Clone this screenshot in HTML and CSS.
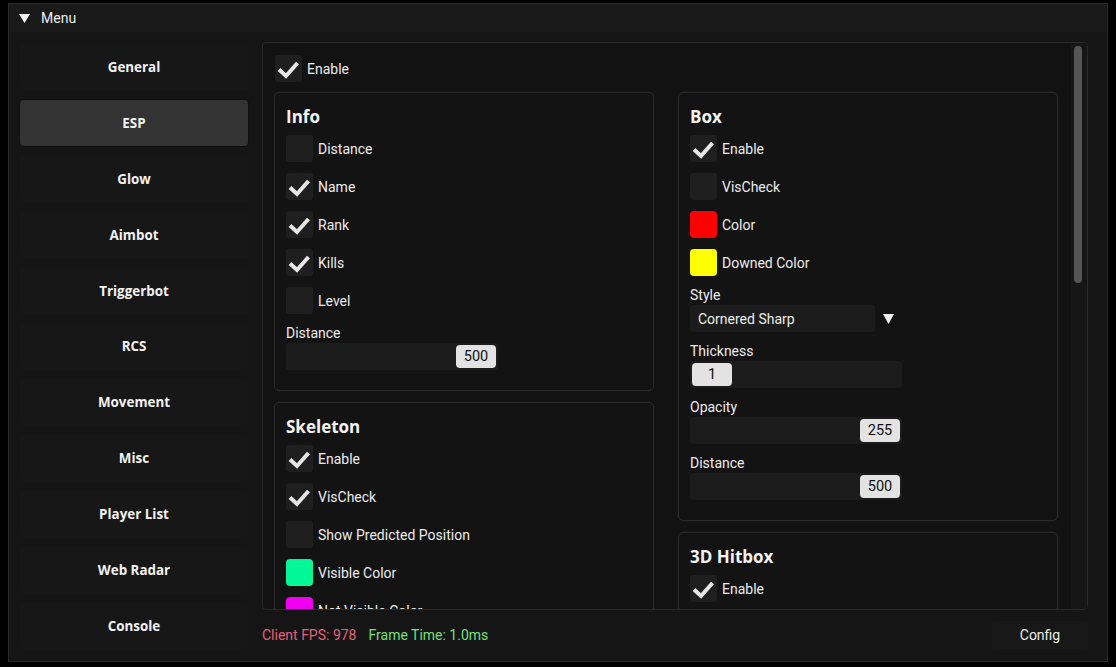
FILE: index.html
```html
<!DOCTYPE html>
<html>
<head>
<meta charset="utf-8">
<link rel="stylesheet" href="styles.css">
</head>
<body>
<div class="window">
  <div class="titlebar">
    <svg class="tri" width="11" height="9" viewBox="0 0 11 9"><polygon points="0,0 11,0 5.5,9" fill="#f0f0f0"/></svg>
    <span class="title">Menu</span>
  </div>
  <div class="body">
    <nav class="sidebar">
      <div class="tab">General</div>
      <div class="tab active">ESP</div>
      <div class="tab">Glow</div>
      <div class="tab">Aimbot</div>
      <div class="tab">Triggerbot</div>
      <div class="tab">RCS</div>
      <div class="tab">Movement</div>
      <div class="tab">Misc</div>
      <div class="tab">Player List</div>
      <div class="tab">Web Radar</div>
      <div class="tab">Console</div>
    </nav>
    <div class="main">
      <div class="panel">
        <div class="content">
          <div class="row top-enable"><span class="cb on"><svg viewBox="0 0 27 27"><polyline points="4,14.5 11,21 22.5,8"/></svg></span><span class="lbl">Enable</span></div>
          <div class="cols">
            <div class="col">
              <section class="group">
                <h2>Info</h2>
                <div class="row"><span class="cb"></span><span class="lbl">Distance</span></div>
                <div class="row"><span class="cb on"><svg viewBox="0 0 27 27"><polyline points="4,14.5 11,21 22.5,8"/></svg></span><span class="lbl">Name</span></div>
                <div class="row"><span class="cb on"><svg viewBox="0 0 27 27"><polyline points="4,14.5 11,21 22.5,8"/></svg></span><span class="lbl">Rank</span></div>
                <div class="row"><span class="cb on"><svg viewBox="0 0 27 27"><polyline points="4,14.5 11,21 22.5,8"/></svg></span><span class="lbl">Kills</span></div>
                <div class="row"><span class="cb"></span><span class="lbl">Level</span></div>
                <div class="field"><div class="flabel">Distance</div><div class="slider end"><span class="grab">500</span></div></div>
              </section>
              <section class="group">
                <h2>Skeleton</h2>
                <div class="row"><span class="cb on"><svg viewBox="0 0 27 27"><polyline points="4,14.5 11,21 22.5,8"/></svg></span><span class="lbl">Enable</span></div>
                <div class="row"><span class="cb on"><svg viewBox="0 0 27 27"><polyline points="4,14.5 11,21 22.5,8"/></svg></span><span class="lbl">VisCheck</span></div>
                <div class="row"><span class="cb"></span><span class="lbl">Show Predicted Position</span></div>
                <div class="row"><span class="sw green"></span><span class="lbl">Visible Color</span></div>
                <div class="row"><span class="sw magenta"></span><span class="lbl">Not Visible Color</span></div>
              </section>
            </div>
            <div class="col">
              <section class="group">
                <h2>Box</h2>
                <div class="row"><span class="cb on"><svg viewBox="0 0 27 27"><polyline points="4,14.5 11,21 22.5,8"/></svg></span><span class="lbl">Enable</span></div>
                <div class="row"><span class="cb"></span><span class="lbl">VisCheck</span></div>
                <div class="row"><span class="sw red"></span><span class="lbl">Color</span></div>
                <div class="row"><span class="sw yellow"></span><span class="lbl">Downed Color</span></div>
                <div class="field"><div class="flabel">Style</div>
                  <div class="combo"><span class="preview">Cornered Sharp</span><span class="arrow"><svg width="11" height="10" viewBox="0 0 11 10"><polygon points="0,0 11,0 5.5,10" fill="#f0f0f0"/></svg></span></div>
                </div>
                <div class="field"><div class="flabel">Thickness</div><div class="slider"><span class="grab">1</span></div></div>
                <div class="field"><div class="flabel">Opacity</div><div class="slider end"><span class="grab">255</span></div></div>
                <div class="field"><div class="flabel">Distance</div><div class="slider end"><span class="grab">500</span></div></div>
              </section>
              <section class="group">
                <h2>3D Hitbox</h2>
                <div class="row"><span class="cb on"><svg viewBox="0 0 27 27"><polyline points="4,14.5 11,21 22.5,8"/></svg></span><span class="lbl">Enable</span></div>
                <div class="row"><span class="cb"></span></div>
              </section>
            </div>
          </div>
        </div>
        <div class="scrollbar"><div class="thumb"></div></div>
      </div>
      <div class="footer">
        <span class="fps">Client FPS: 978</span>
        <span class="ft">Frame Time: 1.0ms</span>
        <span class="spacer"></span>
        <button class="config">Config</button>
      </div>
    </div>
  </div>
</div>
</body>
</html>
```
FILE: styles.css
```css
* { box-sizing: border-box; }
html, body { margin: 0; padding: 0; background: #000; }
body {
  width: 1116px;
  height: 667px;
  overflow: hidden;
  font-family: Roboto, "Liberation Sans", sans-serif;
  font-size: 14px;
  color: #ececec;
}
.window {
  margin: 3px 0 0 8px;
  width: 1100px;
  height: 659px;
  border: 1px solid #2a2a2a;
  background: #151515;
  display: flex;
  flex-direction: column;
}
.titlebar {
  height: 28px;
  flex: none;
  display: flex;
  align-items: center;
  padding-left: 10px;
  background: #1a1a1a;
}
.tri { margin-right: 11px; margin-top: 1px; }
.title { font-size: 14px; color: #ededed; line-height: 16px; }
.body {
  flex: 1;
  display: flex;
  padding: 10px 19px 12px 11px;
  min-height: 0;
}
.sidebar {
  width: 228px;
  flex: none;
  display: flex;
  flex-direction: column;
  gap: 10px;
  margin-top: 2px;
  margin-right: 14px;
}
.tab {
  height: 46px;
  display: flex;
  align-items: center;
  justify-content: center;
  background: #171717;
  border-radius: 4px;
  font-family: "Open Sans", sans-serif;
  font-weight: 700;
  font-size: 13.4px;
  color: #f2f2f2;
}
.tab.active {
  background: #333333;
  box-shadow: 0 0 2px rgba(0,0,0,0.6);
}
.main {
  flex: 1;
  display: flex;
  flex-direction: column;
  min-width: 0;
}
.panel {
  flex: 1;
  min-height: 0;
  border: 1px solid #292929;
  border-radius: 4px;
  background: #121212;
  display: flex;
  overflow: hidden;
}
.content {
  flex: 1;
  padding: 12px 0 0 11px;
  overflow: hidden;
}
.row {
  display: flex;
  align-items: center;
  height: 27px;
}
.top-enable { margin-left: 1px; margin-bottom: 10px; }
.cb {
  width: 27px;
  height: 27px;
  flex: none;
  border-radius: 3px;
  background: #1f1f1f;
  display: flex;
}
.cb svg { width: 27px; height: 27px; }
.cb polyline {
  fill: none;
  stroke: #e6e6e6;
  stroke-width: 4;
  stroke-linecap: butt;
  stroke-linejoin: miter;
}
.lbl { margin-left: 5px; line-height: 16px; color: #ececec; }
.sw {
  width: 27px;
  height: 27px;
  flex: none;
  border-radius: 4px;
}
.red { background: #ff0000; }
.yellow { background: #ffff00; }
.green { background: #00f896; }
.magenta { background: #f000f0; }
.cols {
  display: flex;
  gap: 24px;
  align-items: flex-start;
}
.col {
  width: 380px;
  display: flex;
  flex-direction: column;
  gap: 11px;
}
.group {
  border: 1px solid #2b2b2b;
  border-radius: 5px;
  background: #131313;
  padding: 12px 12px 20px 11px;
  display: flex;
  flex-direction: column;
  gap: 11px;
  box-shadow: 0 0 2px rgba(70,70,70,0.35);
}
.group h2 {
  margin: 0 0 -5px 0;
  font-family: "Open Sans", sans-serif;
  font-weight: 700;
  font-size: 17px;
  line-height: 24px;
  color: #f4f4f4;
}
.field { display: flex; flex-direction: column; }
.flabel { line-height: 16px; margin-bottom: 2px; color: #ececec; }
.slider {
  width: 212px;
  height: 27px;
  background: #1c1c1c;
  border-radius: 3px;
  padding: 2px;
  display: flex;
  justify-content: flex-start;
}
.slider.end { justify-content: flex-end; }
.grab {
  width: 40px;
  height: 23px;
  border-radius: 4px;
  background: #e3e3e3;
  color: #111;
  display: flex;
  align-items: center;
  justify-content: center;
  font-size: 14.5px;
}
.combo {
  width: 212px;
  height: 27px;
  display: flex;
}
.preview {
  width: 185px;
  height: 27px;
  background: #1c1c1c;
  border-radius: 3px;
  padding-left: 8px;
  display: flex;
  align-items: center;
}
.arrow {
  width: 27px;
  height: 27px;
  display: flex;
  align-items: center;
  justify-content: center;
}
.scrollbar {
  width: 16px;
  flex: none;
  background: #161616;
  padding: 3px 4px 0 3px;
}
.thumb {
  width: 8px;
  height: 237px;
  border-radius: 4px;
  background: #565656;
}
.footer {
  flex: none;
  height: 28px;
  margin-top: 11px;
  display: flex;
  align-items: center;
}
.fps { color: #e5607a; }
.ft { color: #74e07a; margin-left: 12px; }
.spacer { flex: 1; }
.config {
  width: 96px;
  height: 28px;
  border: none;
  border-radius: 2px;
  background: #181818;
  color: #ececec;
  font-family: Roboto, sans-serif;
  font-size: 14px;
  padding: 0;
}
```
